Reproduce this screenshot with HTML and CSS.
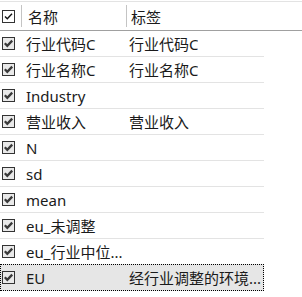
FILE: index.html
```html
<!DOCTYPE html>
<html>
<head>
<meta charset="utf-8">
<link rel="stylesheet" href="styles.css">
</head>
<body>
<div class="grid">
  <div class="head">
    <div class="c-chk"><svg class="chk" width="13" height="13" viewBox="0 0 13 13"><rect x="0.5" y="0.5" width="12" height="12" fill="#fff" stroke="#333"/><path d="M3 6.5 L5.3 8.8 L10 3.8" fill="none" stroke="#111" stroke-width="1.4"/></svg></div>
    <div class="sep"></div>
    <div class="h-name">名称</div>
    <div class="sep"></div>
    <div class="h-label">标签</div>
  </div>
  <div class="row"><div class="c-chk"><svg class="chk" width="13" height="13" viewBox="0 0 13 13"><rect x="0.5" y="0.5" width="12" height="12" fill="#e9e9e9" stroke="#333"/><path d="M2.8 6.3 L5.3 8.8 L10.2 3.6" fill="none" stroke="#3a3a3a" stroke-width="2.3"/></svg></div><div class="c-name">行业代码C</div><div class="c-label">行业代码C</div></div>
  <div class="row"><div class="c-chk"><svg class="chk" width="13" height="13" viewBox="0 0 13 13"><rect x="0.5" y="0.5" width="12" height="12" fill="#e9e9e9" stroke="#333"/><path d="M2.8 6.3 L5.3 8.8 L10.2 3.6" fill="none" stroke="#3a3a3a" stroke-width="2.3"/></svg></div><div class="c-name">行业名称C</div><div class="c-label">行业名称C</div></div>
  <div class="row"><div class="c-chk"><svg class="chk" width="13" height="13" viewBox="0 0 13 13"><rect x="0.5" y="0.5" width="12" height="12" fill="#e9e9e9" stroke="#333"/><path d="M2.8 6.3 L5.3 8.8 L10.2 3.6" fill="none" stroke="#3a3a3a" stroke-width="2.3"/></svg></div><div class="c-name">Industry</div><div class="c-label"></div></div>
  <div class="row"><div class="c-chk"><svg class="chk" width="13" height="13" viewBox="0 0 13 13"><rect x="0.5" y="0.5" width="12" height="12" fill="#e9e9e9" stroke="#333"/><path d="M2.8 6.3 L5.3 8.8 L10.2 3.6" fill="none" stroke="#3a3a3a" stroke-width="2.3"/></svg></div><div class="c-name">营业收入</div><div class="c-label">营业收入</div></div>
  <div class="row"><div class="c-chk"><svg class="chk" width="13" height="13" viewBox="0 0 13 13"><rect x="0.5" y="0.5" width="12" height="12" fill="#e9e9e9" stroke="#333"/><path d="M2.8 6.3 L5.3 8.8 L10.2 3.6" fill="none" stroke="#3a3a3a" stroke-width="2.3"/></svg></div><div class="c-name">N</div><div class="c-label"></div></div>
  <div class="row"><div class="c-chk"><svg class="chk" width="13" height="13" viewBox="0 0 13 13"><rect x="0.5" y="0.5" width="12" height="12" fill="#e9e9e9" stroke="#333"/><path d="M2.8 6.3 L5.3 8.8 L10.2 3.6" fill="none" stroke="#3a3a3a" stroke-width="2.3"/></svg></div><div class="c-name">sd</div><div class="c-label"></div></div>
  <div class="row"><div class="c-chk"><svg class="chk" width="13" height="13" viewBox="0 0 13 13"><rect x="0.5" y="0.5" width="12" height="12" fill="#e9e9e9" stroke="#333"/><path d="M2.8 6.3 L5.3 8.8 L10.2 3.6" fill="none" stroke="#3a3a3a" stroke-width="2.3"/></svg></div><div class="c-name">mean</div><div class="c-label"></div></div>
  <div class="row"><div class="c-chk"><svg class="chk" width="13" height="13" viewBox="0 0 13 13"><rect x="0.5" y="0.5" width="12" height="12" fill="#e9e9e9" stroke="#333"/><path d="M2.8 6.3 L5.3 8.8 L10.2 3.6" fill="none" stroke="#3a3a3a" stroke-width="2.3"/></svg></div><div class="c-name">eu_未调整</div><div class="c-label"></div></div>
  <div class="row"><div class="c-chk"><svg class="chk" width="13" height="13" viewBox="0 0 13 13"><rect x="0.5" y="0.5" width="12" height="12" fill="#e9e9e9" stroke="#333"/><path d="M2.8 6.3 L5.3 8.8 L10.2 3.6" fill="none" stroke="#3a3a3a" stroke-width="2.3"/></svg></div><div class="c-name">eu_行业中位...</div><div class="c-label"></div></div>
  <div class="row sel"><div class="c-chk"><svg class="chk" width="13" height="13" viewBox="0 0 13 13"><rect x="0.5" y="0.5" width="12" height="12" fill="#e9e9e9" stroke="#333"/><path d="M2.8 6.3 L5.3 8.8 L10.2 3.6" fill="none" stroke="#3a3a3a" stroke-width="2.3"/></svg></div><div class="c-name">EU</div><div class="c-label">经行业调整的环境...</div></div>
</div>
</body>
</html>
```
FILE: styles.css
```css
html, body {
  margin: 0;
  padding: 0;
  background: #fff;
}
body {
  font-family: "Noto Sans", "Noto Sans CJK SC", sans-serif;
  font-size: 15px;
  color: #1a1a1a;
  width: 302px;
  height: 297px;
  overflow: hidden;
}
.grid {
  padding-top: 1px;
}
.head {
  display: flex;
  align-items: center;
  height: 28px;
  border-top: 1px solid #e3e3e3;
  border-bottom: 1px solid #a0a0a0;
}
.sep {
  width: 1px;
  height: 22px;
  background: #c4c4c4;
}
.head .c-chk {
  width: 21px;
}
.h-name {
  width: 98px;
  padding-left: 6px;
}
.h-label {
  padding-left: 4px;
}
.c-chk {
  width: 22px;
  height: 100%;
  display: flex;
  align-items: center;
  padding-left: 2px;
  box-sizing: border-box;
}
.chk {
  display: block;
}
.row {
  display: flex;
  align-items: center;
  width: 264px;
  height: 25px;
  border-bottom: 1px solid #e3e3e3;
  white-space: nowrap;
}
.c-name {
  width: 100px;
  padding-left: 4px;
  overflow: hidden;
}
.c-label {
  padding-left: 3px;
  overflow: hidden;
}
.row.sel {
  background: #e6e6e6;
  outline: 1px dotted #000;
  outline-offset: -1px;
  height: 27px;
  margin-top: -1px;
  border-bottom: none;
}
```
